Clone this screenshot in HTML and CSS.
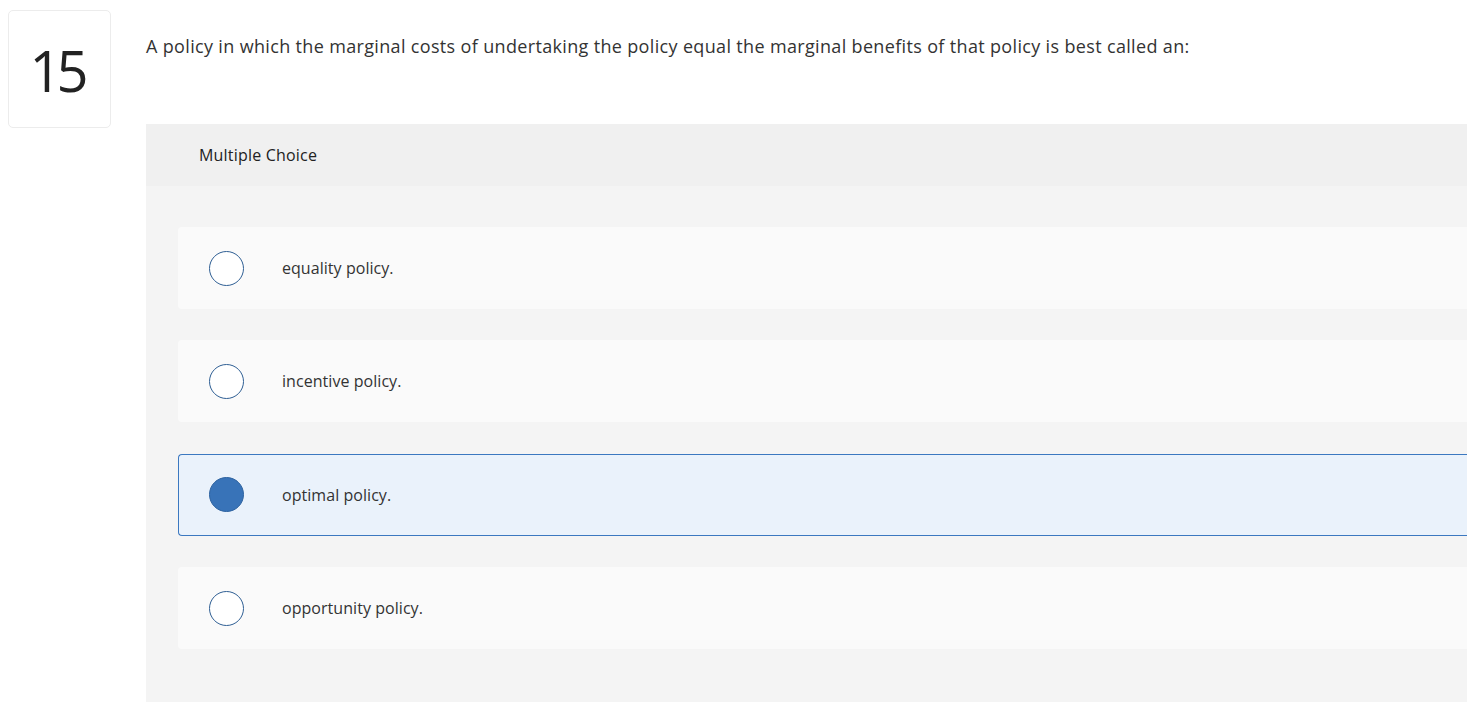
FILE: index.html
```html
<!DOCTYPE html>
<html lang="en">
<head>
<meta charset="utf-8">
<title>Question 15</title>
<link rel="stylesheet" href="styles.css">
</head>
<body>
<div class="question">
  <div class="num-box"><span class="num">15</span></div>
  <div class="content">
    <p class="prompt">A policy in which the marginal costs of undertaking the policy equal the marginal benefits of that policy is best called an:</p>
    <div class="panel">
      <div class="panel-head">Multiple Choice</div>
      <div class="options">
        <div class="option"><span class="radio"></span><span class="label">equality policy.</span></div>
        <div class="option"><span class="radio"></span><span class="label">incentive policy.</span></div>
        <div class="option selected"><span class="radio"></span><span class="label">optimal policy.</span></div>
        <div class="option"><span class="radio"></span><span class="label">opportunity policy.</span></div>
      </div>
    </div>
  </div>
</div>
</body>
</html>
```

FILE: styles.css
```css
* { box-sizing: border-box; }
html, body { margin: 0; padding: 0; background: #fff; }
body {
  font-family: "Open Sans", "Liberation Sans", Arial, sans-serif;
  color: #333;
  overflow: hidden;
}
.question {
  display: flex;
  align-items: flex-start;
  width: 1467px;
  height: 702px;
}
.num-box {
  flex: 0 0 auto;
  margin: 10px 0 0 8px;
  width: 103px;
  height: 118px;
  border: 1px solid #ececec;
  border-radius: 5px;
  display: flex;
  align-items: center;
  justify-content: center;
}
.num {
  font-size: 56px;
  font-weight: 400;
  color: #222;
  line-height: 1;
  padding-top: 2px;
  padding-right: 6px;
  letter-spacing: -5px;
}
.content {
  flex: 1 1 auto;
  margin-left: 35px;
  min-width: 0;
}
.prompt {
  margin: 0;
  padding-top: 34px;
  height: 124px;
  font-size: 18px;
  line-height: 24px;
  letter-spacing: 0.34px;
  color: #333;
}
.panel {
  background: #f4f4f4;
  height: 578px;
}
.panel-head {
  height: 62px;
  background: #f0f0f0;
  padding-left: 53px;
  display: flex;
  align-items: center;
  font-size: 16px;
  letter-spacing: 0.2px;
  color: #222;
}
.options {
  padding: 41px 0 0 32px;
  display: flex;
  flex-direction: column;
  gap: 31.4px;
}
.option {
  height: 82px;
  background: #fafafa;
  border: 1px solid #fafafa;
  border-right: none;
  border-radius: 4px 0 0 4px;
  display: flex;
  align-items: center;
  padding-left: 30px;
}
.option.selected {
  background: #eaf2fb;
  border-color: #3b78c0;
}
.radio {
  width: 35px;
  height: 35px;
  border-radius: 50%;
  border: 1.5px solid #2f5f94;
  background: #fff;
  flex: 0 0 auto;
}
.option.selected .radio {
  background: #3873b8;
  border-color: #2e63a0;
}
.label {
  margin-left: 38px;
  font-size: 16px;
  letter-spacing: 0.05px;
  color: #333;
}
```
